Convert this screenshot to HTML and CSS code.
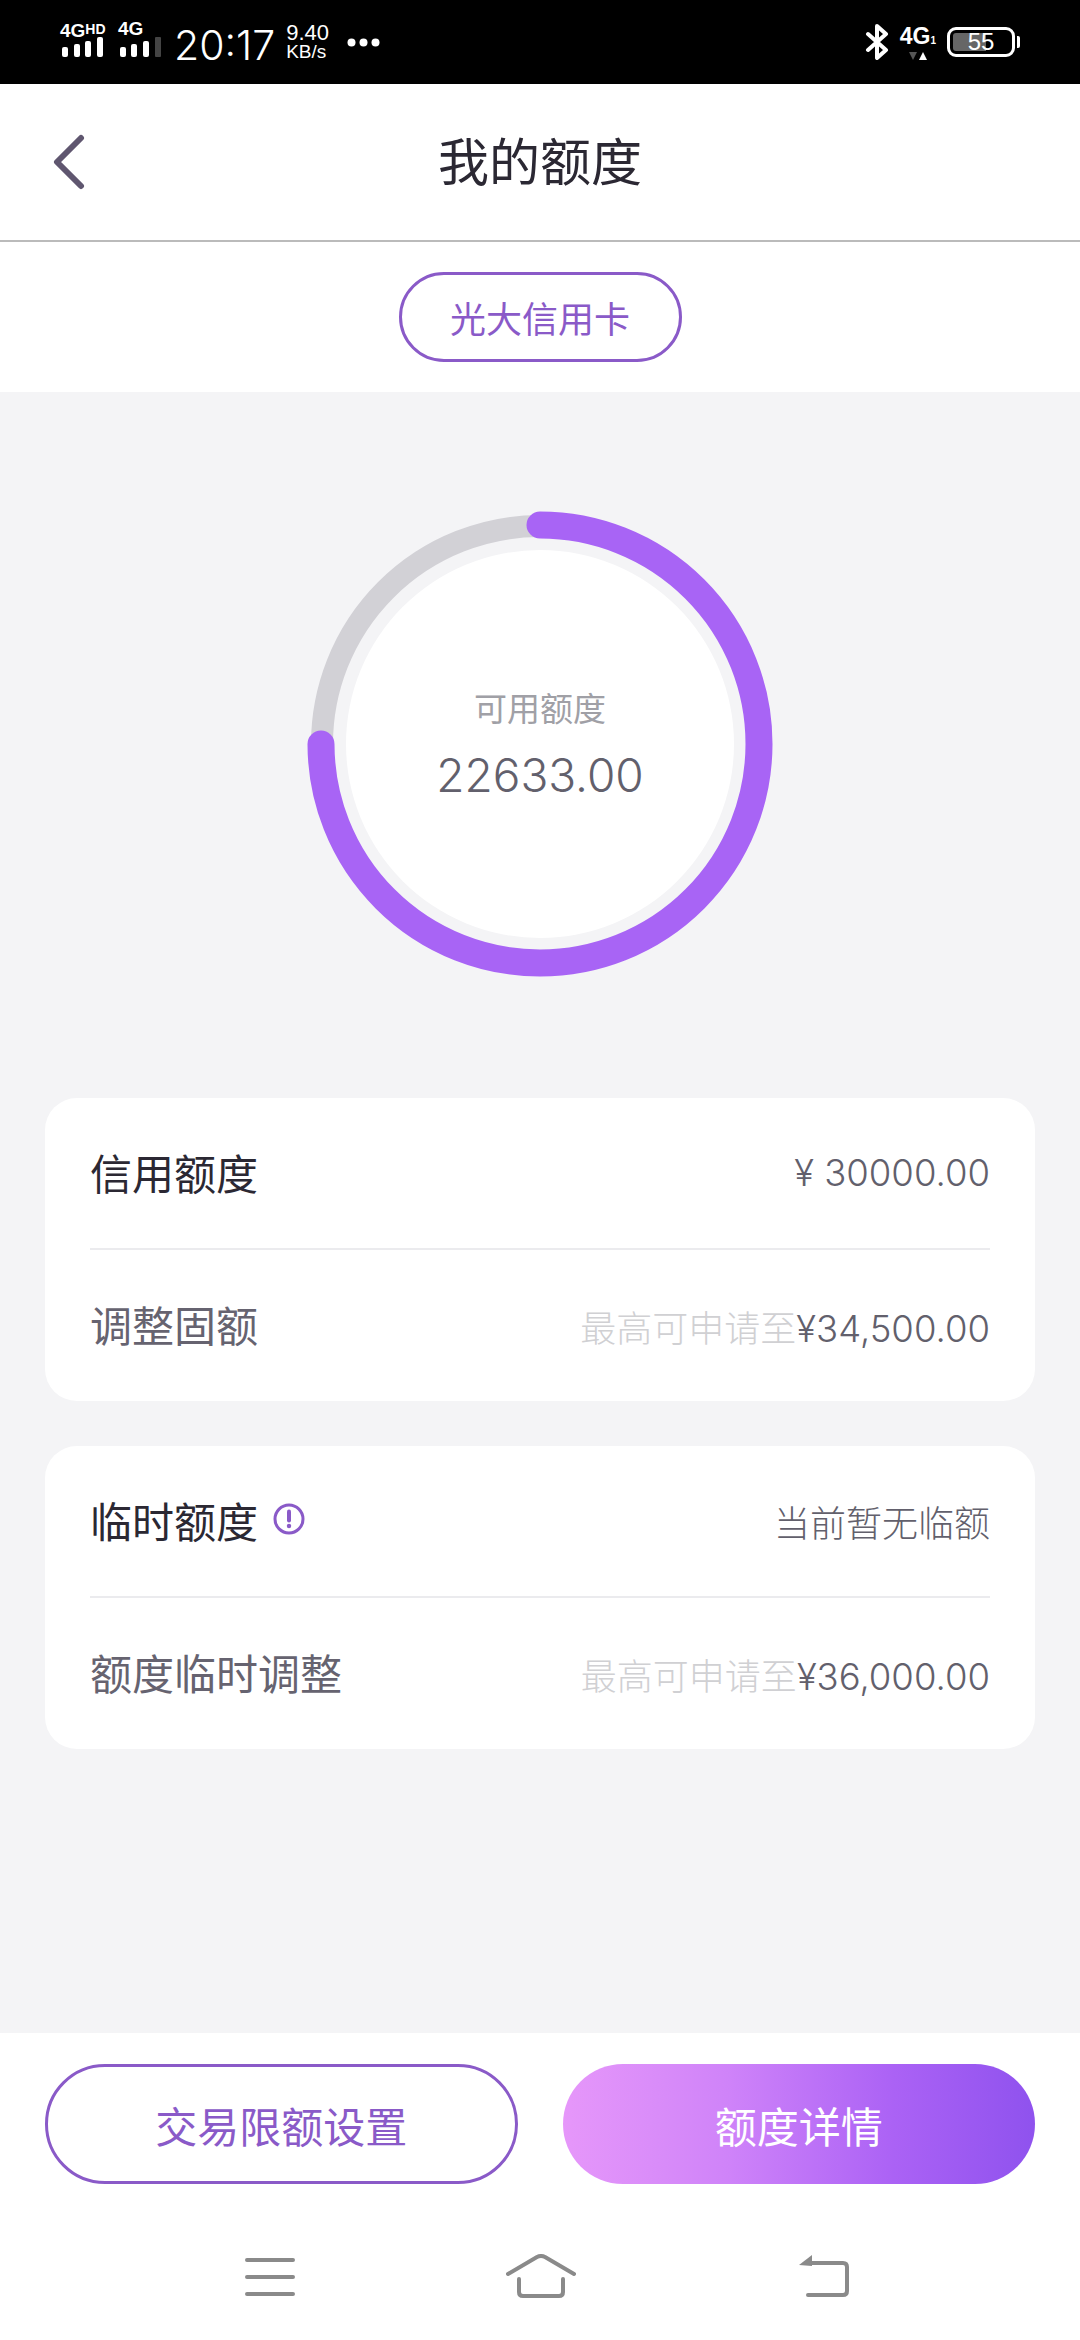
FILE: index.html
```html
<!DOCTYPE html>
<html lang="zh-CN">
<head>
    <meta charset="UTF-8">
    <meta name="viewport" content="width=device-width, initial-scale=1.0">
    <title>我的额度</title>
    <link rel="stylesheet" href="styles.css">
</head>
<body>
    <div class="page">
        <div class="status-bar">
            <div class="signal signal-first">
                <span class="signal-label">4G<small>HD</small></span>
                <svg width="44" height="20" viewBox="0 0 44 20">
                    <rect x="2" y="10" width="6" height="10" rx="2" fill="#fff"/>
                    <rect x="14" y="7" width="6" height="13" rx="2" fill="#fff"/>
                    <rect x="25" y="4" width="6" height="16" rx="2" fill="#fff"/>
                    <rect x="37" y="0" width="6" height="20" rx="2" fill="#fff"/>
                </svg>
            </div>
            <div class="signal signal-second">
                <span class="signal-label">4G</span>
                <svg width="43" height="20" viewBox="0 0 43 20">
                    <rect x="2" y="10" width="6" height="10" rx="2" fill="#fff"/>
                    <rect x="13" y="7" width="6" height="13" rx="2" fill="#fff"/>
                    <rect x="25" y="4" width="6" height="16" rx="2" fill="#fff"/>
                    <rect x="37" y="0" width="6" height="20" rx="1" fill="#444"/>
                </svg>
            </div>
            <span class="clock">20:17</span>
            <div class="speed">
                <span class="speed-num">9.40</span>
                <span class="speed-unit">KB/s</span>
            </div>
            <svg class="dots" width="33" height="9" viewBox="0 0 33 9">
                <circle cx="4.5" cy="4.5" r="4" fill="#fff"/>
                <circle cx="16.5" cy="4.5" r="4" fill="#fff"/>
                <circle cx="28.5" cy="4.5" r="4" fill="#fff"/>
            </svg>
            <div class="status-right">
                <svg class="bluetooth" width="24" height="36" viewBox="0 0 24 36">
                    <path d="M3 10 L21 26 L12 34 L12 2 L21 10 L3 26" fill="none" stroke="#fff" stroke-width="4" stroke-linejoin="round" stroke-linecap="round"/>
                </svg>
                <div class="net">
                    <span class="net-label">4G<small>1</small></span>
                    <svg width="20" height="8" viewBox="0 0 20 8">
                        <path d="M1 0 L9 0 L5 8 Z" fill="#555"/>
                        <path d="M11 8 L19 8 L15 0 Z" fill="#fff"/>
                    </svg>
                </div>
                <div class="battery">
                    <div class="battery-body">
                        <div class="battery-fill"></div>
                        <span class="battery-num">55</span>
                    </div>
                    <div class="battery-nub"></div>
                </div>
            </div>
        </div>

        <div class="header">
            <svg class="back" width="36" height="58" viewBox="0 0 36 58">
                <path d="M31 4 L7 28 L31 52" fill="none" stroke="#5f566f" stroke-width="6" stroke-linecap="round" stroke-linejoin="round"/>
            </svg>
            <h1 class="title">我的额度</h1>
        </div>

        <div class="tabs">
            <div class="pill">光大信用卡</div>
        </div>

        <div class="content">
            <div class="ring">
                <svg width="466" height="466" viewBox="0 0 466 466">
                    <circle cx="233" cy="233" r="218" fill="none" stroke="#d2d1d6" stroke-width="22"/>
                    <circle cx="233" cy="233" r="194" fill="#fff"/>
                    <path d="M233 14 A219 219 0 1 1 14 233" fill="none" stroke="#a864f5" stroke-width="27" stroke-linecap="round"/>
                </svg>
                <div class="ring-text">
                    <span class="ring-label">可用额度</span>
                    <span class="ring-value">22633.00</span>
                </div>
            </div>

            <div class="card">
                <div class="row row-top">
                    <span class="row-name row-name-dark">信用额度</span>
                    <span class="row-value">¥ 30000.00</span>
                </div>
                <div class="row">
                    <span class="row-name">调整固额</span>
                    <span class="row-value"><span class="hint">最高可申请至</span>¥34,500.00</span>
                </div>
            </div>

            <div class="card">
                <div class="row row-top">
                    <span class="row-name row-name-dark">临时额度
                        <svg class="info" width="32" height="32" viewBox="0 0 32 32">
                            <circle cx="16" cy="16" r="14" fill="none" stroke="#8a5ac8" stroke-width="3"/>
                            <path d="M16 8.5 L16 17.5" stroke="#8a5ac8" stroke-width="4" stroke-linecap="round"/>
                            <circle cx="16" cy="23" r="2.2" fill="#8a5ac8"/>
                        </svg>
                    </span>
                    <span class="row-value row-value-cn">当前暂无临额</span>
                </div>
                <div class="row">
                    <span class="row-name">额度临时调整</span>
                    <span class="row-value"><span class="hint">最高可申请至</span>¥36,000.00</span>
                </div>
            </div>
        </div>

        <div class="footer">
            <div class="actions">
                <button class="btn btn-outline">交易限额设置</button>
                <button class="btn btn-fill">额度详情</button>
            </div>
            <div class="nav">
                <svg class="nav-menu" width="50" height="38" viewBox="0 0 50 38">
                    <path d="M2 2 H48 M2 19 H48 M2 36 H48" stroke="#8a8a8a" stroke-width="4" stroke-linecap="round"/>
                </svg>
                <svg class="nav-home" width="70" height="44" viewBox="0 0 70 44">
                    <path d="M2 20 L31 3 Q35 1 39 3 L68 20" fill="none" stroke="#8a8a8a" stroke-width="4" stroke-linecap="round" stroke-linejoin="round"/>
                    <path d="M13 25 V38 Q13 42 17 42 H53 Q57 42 57 38 V25" fill="none" stroke="#8a8a8a" stroke-width="4" stroke-linecap="round"/>
                </svg>
                <svg class="nav-back" width="52" height="44" viewBox="0 0 52 44">
                    <path d="M14 1 L14 12 L1 11 Z" fill="#8a8a8a"/>
                    <path d="M13 9 H45 Q49 9 49 13 V37 Q49 41 45 41 H10" fill="none" stroke="#8a8a8a" stroke-width="4" stroke-linecap="round"/>
                </svg>
            </div>
        </div>
    </div>
</body>
</html>
```

FILE: styles.css
```css
* {
    box-sizing: border-box;
}
body {
    margin: 0;
    background: #fff;
    font-family: "Noto Sans CJK SC", "Noto Sans", sans-serif;
}
.page {
    display: flex;
    flex-direction: column;
    width: 1080px;
    height: 2340px;
    overflow: hidden;
}

/* status bar */
.status-bar {
    display: flex;
    align-items: center;
    height: 84px;
    flex-shrink: 0;
    padding-left: 60px;
    background: #000;
    color: #fff;
    font-family: "Liberation Sans", sans-serif;
}
.signal {
    display: flex;
    flex-direction: column;
    margin-top: -6px;
}
.signal-first {
    width: 46px;
}
.signal-second {
    margin-left: 12px;
}
.signal-label {
    height: 16px;
    font-size: 19px;
    line-height: 16px;
    font-weight: bold;
    white-space: nowrap;
}
.signal-label small {
    font-size: 14px;
    vertical-align: 3px;
}
.clock {
    margin-left: 13px;
    margin-top: 6px;
    font-family: Inter, sans-serif;
    font-size: 41px;
    font-weight: 300;
}
.speed {
    display: flex;
    flex-direction: column;
    margin-left: 11px;
}
.speed-num {
    font-size: 22px;
    line-height: 20px;
}
.speed-unit {
    font-size: 19px;
    line-height: 18px;
}
.dots {
    margin-left: 18px;
}
.status-right {
    display: flex;
    align-items: center;
    margin-left: auto;
    padding-right: 60px;
}
.bluetooth {
    margin-right: 11px;
}
.net {
    display: flex;
    flex-direction: column;
    align-items: center;
    margin-right: 11px;
}
.net-label {
    font-size: 23px;
    line-height: 22px;
    font-weight: bold;
}
.net-label small {
    font-size: 10px;
}
.battery {
    display: flex;
    align-items: center;
}
.battery-body {
    position: relative;
    display: flex;
    justify-content: center;
    align-items: center;
    width: 68px;
    height: 30px;
    border: 3px solid #fff;
    border-radius: 9px;
}
.battery-fill {
    position: absolute;
    left: 3px;
    top: 3px;
    bottom: 3px;
    width: 33px;
    background: #666;
    border-radius: 3px 0 0 3px;
}
.battery-num {
    position: relative;
    font-size: 24px;
    line-height: 24px;
}
.battery-nub {
    width: 3px;
    height: 12px;
    margin-left: 2px;
    background: #fff;
    border-radius: 0 2px 2px 0;
}

/* header */
.header {
    position: relative;
    display: flex;
    justify-content: center;
    align-items: center;
    height: 158px;
    flex-shrink: 0;
    padding-bottom: 6px;
    border-bottom: 2px solid #bbb;
}
.back {
    position: absolute;
    left: 50px;
    top: 50px;
}
.title {
    margin: 0;
    font-size: 51px;
    font-weight: 400;
    color: #2b2833;
}
.tabs {
    display: flex;
    justify-content: center;
    height: 150px;
    flex-shrink: 0;
    padding-top: 30px;
}
.pill {
    display: flex;
    justify-content: center;
    align-items: center;
    width: 283px;
    height: 90px;
    border: 3px solid #8a5ac8;
    border-radius: 45px;
    font-size: 36px;
    color: #8a5ac8;
}

/* main */
.content {
    flex: 1;
    padding: 119px 45px 0;
    background: #f4f4f6;
}
.ring {
    position: relative;
    width: 466px;
    height: 466px;
    margin: 0 auto 121px;
}
.ring svg {
    display: block;
}
.ring-text {
    position: absolute;
    left: 0;
    right: 0;
    top: 173px;
    display: flex;
    flex-direction: column;
    align-items: center;
}
.ring-label {
    font-size: 33px;
    line-height: 46px;
    color: #a0a0a6;
}
.ring-value {
    margin-top: 17px;
    font-family: Inter, sans-serif;
    font-size: 46px;
    line-height: 56px;
    font-weight: 300;
    color: #62606c;
}
.card {
    margin-bottom: 45px;
    padding: 0 45px;
    background: #fff;
    border-radius: 32px;
}
.row {
    display: flex;
    justify-content: space-between;
    align-items: center;
    height: 151px;
    padding-bottom: 4px;
}
.row-top {
    height: 152px;
    border-bottom: 2px solid #ebebee;
}
.row-name {
    display: flex;
    align-items: center;
    font-size: 42px;
    color: #666370;
}
.row-name-dark {
    color: #2b2833;
}
.info {
    margin-left: 15px;
}
.row-value {
    margin-top: 4px;
    font-family: Inter, "Noto Sans CJK SC", sans-serif;
    font-size: 36.5px;
    font-weight: 300;
    color: #62606c;
}
.row-value-cn {
    font-size: 36px;
}
.hint {
    font-size: 36px;
    color: #d0d0d3;
}

/* footer */
.footer {
    display: flex;
    flex-direction: column;
    height: 307px;
    flex-shrink: 0;
    background: #fff;
    padding: 31px 45px 0;
}
.actions {
    display: grid;
    grid-template-columns: 1fr 1fr;
    gap: 45px;
}
.btn {
    height: 120px;
    padding: 0;
    border-radius: 60px;
    font-family: "Noto Sans CJK SC", sans-serif;
    font-size: 42px;
}
.btn-outline {
    background: #fff;
    border: 3px solid #8a5ac8;
    color: #8a5ac8;
}
.btn-fill {
    border: none;
    background: linear-gradient(90deg, #e697fa 0%, #d98cf9 20%, #cf83f9 35%, #ab62f5 70%, #8f52ee 100%);
    color: #fff;
}
.nav {
    display: flex;
    align-items: flex-start;
    margin-top: 70px;
}
.nav-menu {
    margin-top: 4px;
    margin-left: 200px;
}
.nav-home {
    margin-left: 211px;
}
.nav-back {
    margin-left: 222px;
}
```
